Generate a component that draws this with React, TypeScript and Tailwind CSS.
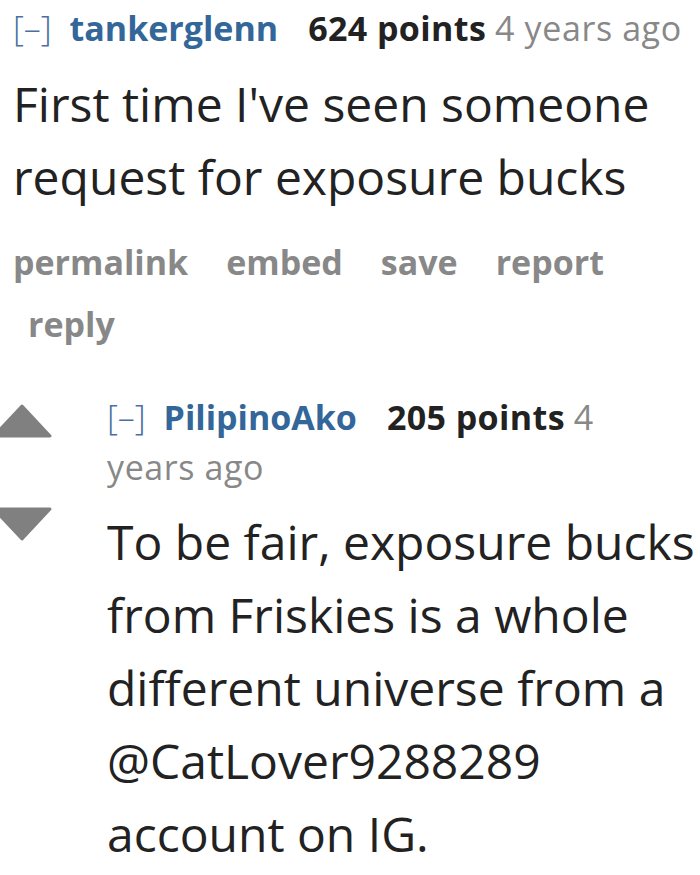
import React from 'react';

function Arrow({ down }: { down?: boolean }) {
  return (
    <svg width="60" height="34" viewBox="0 0 60 34" className="block">
      <path
        d={down ? 'M2 2 L58 2 L30 32 Z' : 'M30 2 L58 32 L2 32 Z'}
        fill="#808080"
        stroke="#808080"
        strokeWidth="3"
        strokeLinejoin="round"
      />
    </svg>
  );
}

function Tagline({
  user,
  points,
  time,
  className = '',
}: {
  user: string;
  points: string;
  time: string;
  className?: string;
}) {
  return (
    <p className={`text-[34px] leading-[50px] ${className}`}>
      <span className="text-[#4a6fa0] font-light">[–]</span>{' '}
      <span className="ml-[9px] font-bold text-[#336699]">{user}</span>
      <span className="ml-[30px] font-bold text-[#222] tracking-[0.4px]">{points}</span>{' '}
      <span className="text-[#888] tracking-[0.6px]">{time}</span>
    </p>
  );
}

export default function App() {
  const links = ['permalink', 'embed', 'save', 'report', 'reply'];
  return (
    <div className="w-[700px] h-[875px] overflow-hidden bg-white font-['Open_Sans',sans-serif]">
      <div className="pl-[13px] pt-[3px]">
        <Tagline user="tankerglenn" points="624 points" time="4 years ago" />
        <p className="mt-[14px] text-[48px] leading-[73px] text-[#222] pr-4">
          First time I've seen someone request for exposure bucks
        </p>
        <ul className="mt-[18px] flex flex-wrap text-[34px] leading-[62px] font-bold text-[#888]">
          {links.map((l, i) => (
            <li key={l} className={i === 0 ? 'pr-[23px]' : 'pl-[15px] pr-[23px]'}>
              {l}
            </li>
          ))}
        </ul>
      </div>
      <div className="mt-[37px] flex">
        <div className="w-[115px] shrink-0 -ml-[8px] pt-[12px] flex flex-col gap-[69px]">
          <Arrow />
          <Arrow down />
        </div>
        <div className="flex-1">
          <Tagline user="PilipinoAko" points="205 points" time="4 years ago" className="pr-[24px]" />
          <p className="mt-[13px] text-[48px] leading-[73px] text-[#222]">
            To be fair, exposure bucks from Friskies is a whole different universe from a
            @CatLover9288289 account on IG.
          </p>
        </div>
      </div>
    </div>
  );
}
